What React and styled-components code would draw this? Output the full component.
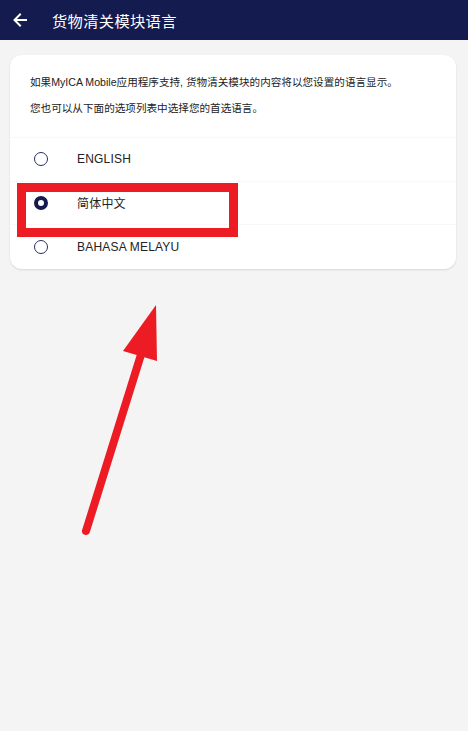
import React from 'react';
import styled, { createGlobalStyle } from 'styled-components';

const GlobalStyle = createGlobalStyle`
    html, body {
        margin: 0;
        padding: 0;
        background: #f4f4f4;
        font-family: 'Liberation Sans', 'Noto Sans CJK SC', sans-serif;
    }
    #root {
        min-height: 731px;
    }
`;

const Page = styled.div`
    position: relative;
    width: 468px;
    height: 731px;
    background: #f4f4f4;
    overflow: hidden;
`;

const Header = styled.div`
    display: flex;
    align-items: center;
    height: 40px;
    background: #141b4f;
    color: #fff;
    padding: 0 12px;
    box-sizing: border-box;
`;

const BackButton = styled.div`
    display: flex;
    align-items: center;
    width: 40px;
`;

const Title = styled.div`
    font-family: 'Noto Sans CJK SC', sans-serif;
    font-size: 15.3px;
    letter-spacing: 0.3px;
`;

const Card = styled.div`
    margin: 15px 12px 0 10px;
    background: #fff;
    border-radius: 12px;
    box-shadow: 0 1px 2px rgba(0, 0, 0, 0.12);
    padding: 19px 0 0;
`;

const Intro = styled.p`
    margin: 0 0 10px;
    padding: 0 20px;
    font-family: 'Liberation Sans', 'Noto Sans CJK SC', sans-serif;
    font-size: 10.6px;
    line-height: 16px;
    color: #222;
`;

const Options = styled.div`
    margin-top: 21px;
    border-top: 1px solid #f8f8f8;
`;

const Option = styled.div`
    display: flex;
    align-items: center;
    height: 43.5px;
    padding-left: 24px;
    box-sizing: border-box;
    border-bottom: ${(p) => (p.last ? 'none' : '1px solid #f8f8f8')};
`;

const Radio = styled.span`
    width: ${(p) => (p.checked ? '6px' : '12px')};
    height: ${(p) => (p.checked ? '6px' : '12px')};
    border-radius: 50%;
    border: ${(p) => (p.checked ? '4px solid #141b4f' : '1px solid #2a3060')};
    background: #fff;
    flex-shrink: 0;
`;

const Label = styled.span`
    margin-left: 29px;
    font-family: 'Liberation Sans', 'Noto Sans CJK SC', sans-serif;
    font-size: 12px;
    color: #222;
    letter-spacing: 0.2px;
`;

const Highlight = styled.div`
    position: absolute;
    left: 17px;
    top: 183px;
    width: 203px;
    height: 36px;
    border: 9px solid #ed1c24;
`;

const Pointer = styled.svg`
    position: absolute;
    left: 0;
    top: 0;
    pointer-events: none;
`;

const languages = [
    { id: 'en', label: 'ENGLISH' },
    { id: 'zh', label: '简体中文', checked: true },
    { id: 'ms', label: 'BAHASA MELAYU' },
];

export default function App() {
    return (
        <Page>
            <GlobalStyle />
            <Header>
                <BackButton>
                    <svg width="16" height="16" viewBox="0 0 16 16">
                        <path d="M14 8H3M8 2.5L2.5 8 8 13.5" stroke="#fff" strokeWidth="2" fill="none" strokeLinecap="square" />
                    </svg>
                </BackButton>
                <Title>货物清关模块语言</Title>
            </Header>
            <Card>
                <Intro>如果MyICA Mobile应用程序支持, 货物清关模块的内容将以您设置的语言显示。</Intro>
                <Intro>您也可以从下面的选项列表中选择您的首选语言。</Intro>
                <Options>
                    {languages.map((lang, i) => (
                        <Option key={lang.id} last={i === languages.length - 1}>
                            <Radio checked={lang.checked} />
                            <Label>{lang.label}</Label>
                        </Option>
                    ))}
                </Options>
            </Card>
            <Highlight />
            <Pointer width="468" height="731" viewBox="0 0 468 731">
                <line x1="86" y1="531" x2="144" y2="345" stroke="#ed1c24" strokeWidth="8" strokeLinecap="round" />
                <polygon points="156,305 123,351 157,361" fill="#ed1c24" />
            </Pointer>
        </Page>
    );
}
